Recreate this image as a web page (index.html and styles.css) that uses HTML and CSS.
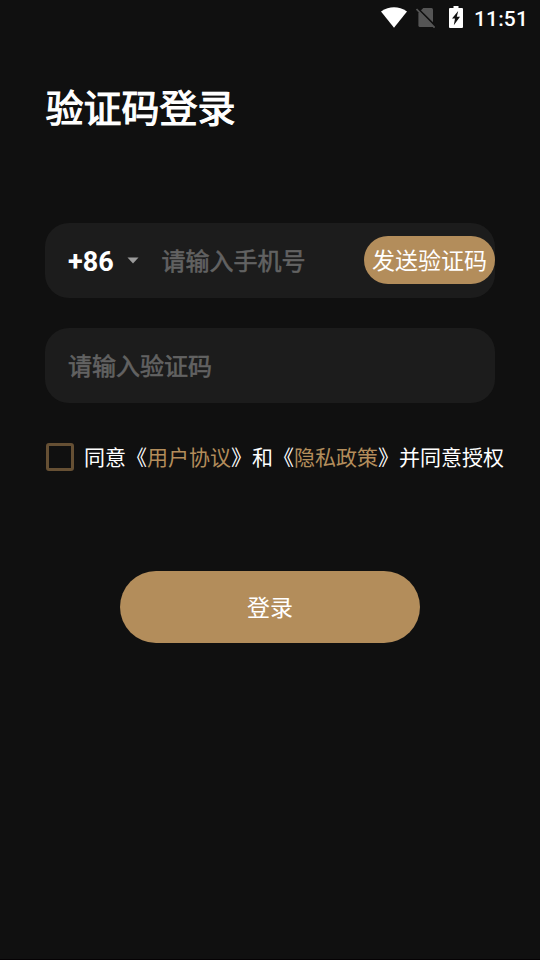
FILE: index.html
```html
<!DOCTYPE html>
<html lang="zh-CN">
<head>
<meta charset="utf-8">
<title>验证码登录</title>
<link rel="stylesheet" href="styles.css">
</head>
<body>
<header class="status">
  <svg class="wifi" width="26" height="21" viewBox="0 0 26 21"><path d="M0 4.400Q13-4 26 4.400L13 20.700Z" fill="#fff"/></svg>
  <svg class="sim" width="20" height="22" viewBox="0 0 20 22"><path d="M7.300 1H15.500Q17 1 17 2.500V20H4Q2.400 20 2.400 18.500V6Z" fill="#555"/><path d="M1.400 1.100L20 19.700" stroke="#101010" stroke-width="2"/><path d="M.5 2L18.600 20.600" stroke="#555" stroke-width="1.700"/></svg>
  <svg class="battery" width="14" height="22" viewBox="0 0 14 22"><path d="M4.500 0H9.500V2H13Q14 2 14 3V21Q14 22 13 22H1Q0 22 0 21V3Q0 2 1 2H4.500Z" fill="#fff"/><path d="M9.200 5L3 12.600H6L4.800 19.200L11 10.800H7.800Z" fill="#101010"/></svg>
  <span class="clock">11:51</span>
</header>
<main class="page">
  <h1 class="title">验证码登录</h1>
  <div class="field">
    <span class="code">+86</span>
    <svg class="caret" width="12" height="7" viewBox="0 0 12 7"><path d="M.5.5H11.500L6 6.500Z" fill="#9b9b9b"/></svg>
    <span class="hint">请输入手机号</span>
    <button class="send">发送验证码</button>
  </div>
  <div class="field"><span class="hint">请输入验证码</span></div>
  <div class="agree">
    <span class="checkbox"></span>
    <span class="terms">同意《<span class="link">用户协议</span>》和《<span class="link">隐私政策</span>》并同意授权</span>
  </div>
  <button class="login">登录</button>
</main>
</body>
</html>
```

FILE: styles.css
```css
* { box-sizing: border-box; }
body {
  margin: 0;
  height: 960px;
  overflow: hidden;
  background: #101010;
  border-bottom: 1px solid #050204;
  color: #fff;
  font-family: "Noto Sans CJK SC", sans-serif;
}
button {
  border: 0;
  padding: 0 0 2px;
  color: #fff;
  background: #b38d5b;
  font: 23px/34px "Noto Sans CJK SC", sans-serif;
}
.status {
  display: flex;
  justify-content: flex-end;
  align-items: flex-start;
  height: 36px;
  padding: 6px 12px 0 0;
}
.wifi { margin: 1px 9.5px 0 0; }
.sim { margin: 1px 13px 0 0; }
.battery { margin-right: 11px; }
.clock {
  width: 54px;
  font: 500 21px/26px Roboto, sans-serif;
  letter-spacing: .15px;
  white-space: nowrap;
}
.page { padding: 0 45px; }
.title {
  margin: 41px 0 117px;
  padding-left: .5px;
  height: 29px;
  line-height: 58px;
  font-size: 38px;
  font-weight: 400;
  -webkit-text-stroke: 1.1px #fff;
}
.field {
  display: flex;
  align-items: center;
  height: 75px;
  margin-bottom: 30px;
  padding-left: 23px;
  border-radius: 24px;
  background: #1c1c1c;
}
.code {
  width: 59px;
  padding-top: 2px;
  font: 700 27px/32px Roboto, sans-serif;
}
.caret { margin-right: 22.5px; }
.hint {
  color: #626262;
  font-size: 24px;
  font-weight: 400;
  line-height: 36px;
  padding-bottom: 1px;
  -webkit-text-stroke: .6px #626262;
}
.send {
  width: 131px;
  height: 48px;
  margin: 0 0 1px auto;
  border-radius: 24px;
}
.agree {
  display: flex;
  align-items: center;
  height: 32px;
  margin-top: 38px;
  padding-left: 1px;
}
.checkbox {
  flex: none;
  width: 28px;
  height: 28px;
  margin-right: 10px;
  border: 3px solid #665034;
  border-radius: 3px;
}
.terms {
  font-size: 21px;
  line-height: 32px;
  padding-bottom: 2px;
  white-space: nowrap;
}
.link { color: #b38d5b; }
.login {
  display: block;
  width: 300px;
  height: 72px;
  margin: 98px auto 0;
  border-radius: 36px;
}
```
